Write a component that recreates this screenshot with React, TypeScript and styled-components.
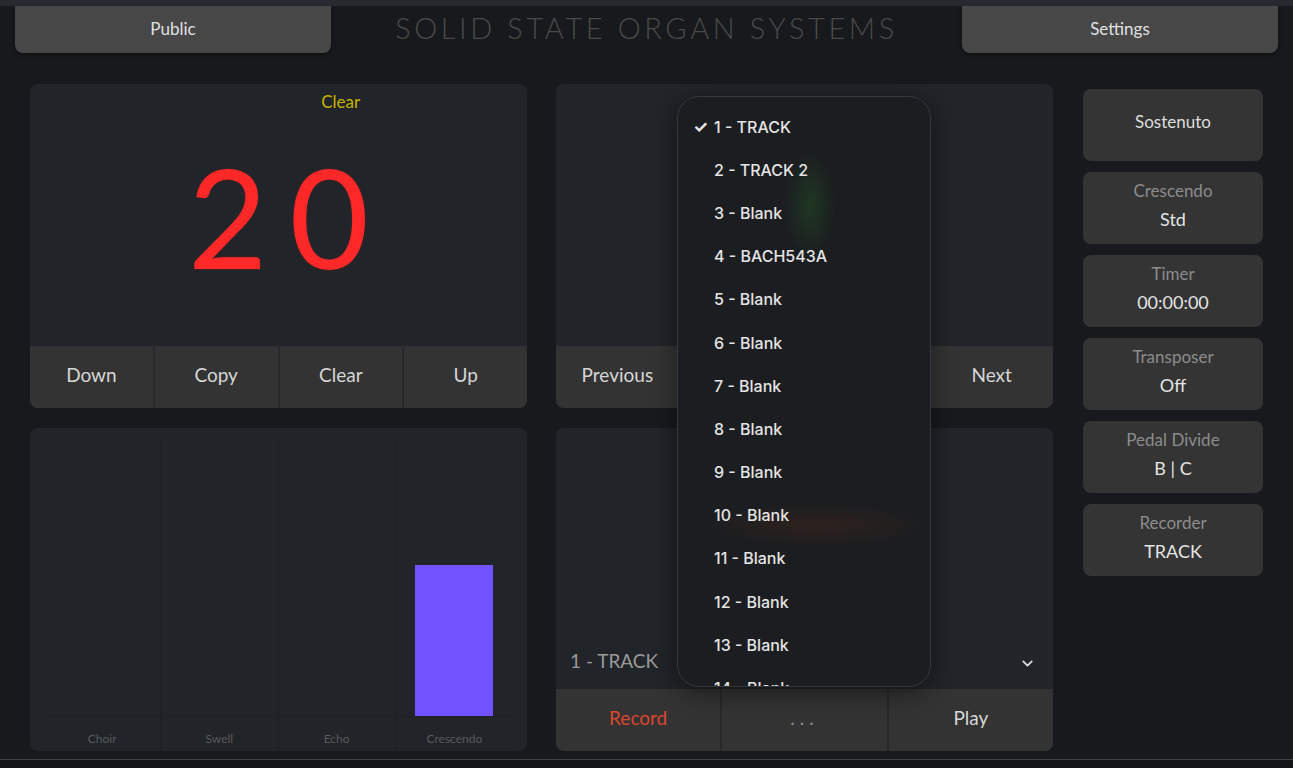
import React from "react";
import styled, { createGlobalStyle } from "styled-components";
import { ChevronDown } from "lucide-react";

const GlobalStyle = createGlobalStyle`
  html, body { margin: 0; padding: 0; background: #17191c; }
  body { font-family: Lato, "Noto Sans", sans-serif; }
  * { box-sizing: border-box; }
`;

const Page = styled.div`
  width: 1293px;
  height: 768px;
  overflow: hidden;
  display: flex;
  flex-direction: column;
  background: #17191c;
`;

const TopStrip = styled.div`
  height: 6px;
  background: #26292d;
`;

const Header = styled.header`
  display: grid;
  grid-template-columns: 316px 1fr 316px;
  height: 47px;
  padding: 0 15px;
`;

const HeaderButton = styled.div`
  background: #474747;
  border-radius: 0 0 8px 8px;
  color: #e0e0e0;
  font-size: 17px;
  display: flex;
  align-items: center;
  justify-content: center;
  padding-bottom: 3px;
  box-shadow: 0 2px 4px rgba(0, 0, 0, 0.35);
`;

const Title = styled.h1`
  margin: 0;
  display: flex;
  align-items: center;
  justify-content: center;
  color: #4a4a4a;
  font-size: 29px;
  font-weight: 300;
  letter-spacing: 3.6px;
  padding-bottom: 4px;
  white-space: nowrap;
`;

const Main = styled.main`
  display: grid;
  grid-template-columns: 497px 497px 181px;
  column-gap: 29px;
  padding: 31px 0 0 30px;
`;

const Column = styled.div`
  display: flex;
  flex-direction: column;
  gap: 20px;
  position: relative;
`;

const Panel = styled.section<{ $h: number }>`
  height: ${(p) => p.$h}px;
  background: #212428;
  border-radius: 8px;
  overflow: hidden;
  display: flex;
  flex-direction: column;
`;

const Display = styled.div`
  flex: 1;
  display: grid;
  grid-template-columns: repeat(4, 1fr);
  grid-template-rows: 1fr;
`;

const ClearLabel = styled.div`
  grid-row: 1;
  grid-column: 3;
  align-self: start;
  text-align: center;
  padding-top: 7px;
  color: #c8b200;
  font-size: 17px;
`;

const BigNumber = styled.div`
  grid-row: 1;
  grid-column: 1 / -1;
  align-self: center;
  text-align: center;
  color: #ff2828;
  font-size: 137px;
  line-height: 1;
  letter-spacing: 22px;
  padding-left: 22px;
  margin-top: 2px;
  text-shadow: 0 0 2px rgba(255, 40, 40, 0.4);
`;

const ButtonRow = styled.div<{ $cols: number }>`
  height: 62px;
  display: grid;
  grid-template-columns: repeat(${(p) => p.$cols}, 1fr);
  gap: 2px;
  background: #27292c;
`;

const PanelButton = styled.div<{ $tone?: "red" | "muted" }>`
  background: #333333;
  display: flex;
  align-items: center;
  justify-content: center;
  padding-bottom: 5px;
  font-size: 19px;
  color: ${(p) => (p.$tone === "red" ? "#dc4630" : p.$tone === "muted" ? "#8a8a8a" : "#d6d6d6")};
  letter-spacing: ${(p) => (p.$tone === "muted" ? "5px" : "0")};
`;

const Stage = styled.div`
  flex: 1;
`;

const Chart = styled.div`
  flex: 1;
  display: grid;
  grid-template-columns: repeat(4, 1fr);
  padding: 8px 14px 0;
`;

const ChartColumn = styled.div`
  display: flex;
  flex-direction: column;
  border-right: 1px solid rgba(0, 0, 0, 0.09);
  &:last-child { border-right: none; }
`;

const BarArea = styled.div`
  flex: 1;
  display: flex;
  align-items: flex-end;
  justify-content: center;
  border-bottom: 1px solid #1e2023;
`;

const Bar = styled.div`
  width: 78px;
  background: #7252ff;
`;

const ChartLabel = styled.div`
  height: 34px;
  padding-top: 8px;
  display: flex;
  align-items: center;
  justify-content: center;
  font-size: 12px;
  color: #585a5c;
`;

const TrackArea = styled.div`
  flex: 1;
  display: flex;
  align-items: flex-end;
  justify-content: space-between;
  padding: 0 17px 17px 14px;
`;

const TrackName = styled.div`
  color: #9a9a9a;
  font-size: 19px;
`;

const Dropdown = styled.div`
  position: absolute;
  top: 12px;
  left: 121px;
  width: 254px;
  height: 591px;
  border-radius: 22px;
  border: 1px solid #35383c;
  overflow: hidden;
  padding-top: 8px;
  background:
    radial-gradient(ellipse 26px 55px at 132px 108px, rgba(40, 130, 40, 0.26), transparent),
    radial-gradient(ellipse 115px 22px at 140px 428px, rgba(150, 60, 20, 0.16), transparent),
    #1b1d20;
  box-shadow: 0 6px 24px rgba(0, 0, 0, 0.45);
`;

const MenuItem = styled.div`
  height: 43.2px;
  display: flex;
  align-items: center;
  padding-left: 15px;
  font-family: Inter, "Liberation Sans", sans-serif;
  font-size: 16px;
  font-weight: 500;
  color: #e4e4e4;
  white-space: nowrap;
`;

const Check = styled.span`
  width: 21px;
  font-size: 17px;
  font-weight: 700;
`;

const RightColumn = styled.div`
  display: flex;
  flex-direction: column;
  gap: 11px;
  padding: 5px 0 0 1px;
`;

const SideButton = styled.div`
  width: 180px;
  height: 72px;
  background: #343434;
  border-radius: 8px;
  display: flex;
  flex-direction: column;
  align-items: center;
  justify-content: center;
  padding-bottom: 7px;
`;

const SideTitle = styled.div<{ $main?: boolean }>`
  line-height: 28px;
  font-size: 17px;
  color: ${(p) => (p.$main ? "#dedede" : "#8c8c8c")};
`;

const SideValue = styled.div`
  line-height: 28px;
  font-size: 18px;
  color: #e4e4e4;
`;

const Footer = styled.div`
  margin-top: auto;
  height: 9px;
  border-top: 1px solid #3d4044;
  background: #121417;
`;

const tracks = [
  "1 - TRACK",
  "2 - TRACK 2",
  "3 - Blank",
  "4 - BACH543A",
  "5 - Blank",
  "6 - Blank",
  "7 - Blank",
  "8 - Blank",
  "9 - Blank",
  "10 - Blank",
  "11 - Blank",
  "12 - Blank",
  "13 - Blank",
  "14 - Blank",
];

const divisions = [
  { name: "Choir", level: 0 },
  { name: "Swell", level: 0 },
  { name: "Echo", level: 0 },
  { name: "Crescendo", level: 151 },
];

const side = [
  { title: "Sostenuto" },
  { title: "Crescendo", value: "Std" },
  { title: "Timer", value: "00:00:00" },
  { title: "Transposer", value: "Off" },
  { title: "Pedal Divide", value: "B | C" },
  { title: "Recorder", value: "TRACK" },
];

export default function App() {
  return (
    <>
      <GlobalStyle />
      <Page>
        <TopStrip />
        <Header>
          <HeaderButton>Public</HeaderButton>
          <Title>SOLID STATE ORGAN SYSTEMS</Title>
          <HeaderButton>Settings</HeaderButton>
        </Header>
        <Main>
          <Column>
            <Panel $h={324}>
              <Display>
                <ClearLabel>Clear</ClearLabel>
                <BigNumber>20</BigNumber>
              </Display>
              <ButtonRow $cols={4}>
                <PanelButton>Down</PanelButton>
                <PanelButton>Copy</PanelButton>
                <PanelButton>Clear</PanelButton>
                <PanelButton>Up</PanelButton>
              </ButtonRow>
            </Panel>
            <Panel $h={323}>
              <Chart>
                {divisions.map((d) => (
                  <ChartColumn key={d.name}>
                    <BarArea>
                      {d.level > 0 && <Bar style={{ height: d.level }} />}
                    </BarArea>
                    <ChartLabel>{d.name}</ChartLabel>
                  </ChartColumn>
                ))}
              </Chart>
            </Panel>
          </Column>
          <Column>
            <Panel $h={324}>
              <Stage />
              <ButtonRow $cols={4}>
                <PanelButton>Previous</PanelButton>
                <PanelButton />
                <PanelButton />
                <PanelButton>Next</PanelButton>
              </ButtonRow>
            </Panel>
            <Panel $h={323}>
              <TrackArea>
                <TrackName>1 - TRACK</TrackName>
                <ChevronDown size={17} strokeWidth={2.6} color="#dcdcdc" />
              </TrackArea>
              <ButtonRow $cols={3}>
                <PanelButton $tone="red">Record</PanelButton>
                <PanelButton $tone="muted">...</PanelButton>
                <PanelButton>Play</PanelButton>
              </ButtonRow>
            </Panel>
            <Dropdown>
              {tracks.map((t, i) => (
                <MenuItem key={t}>
                  <Check>{i === 0 ? "✓" : ""}</Check>
                  {t}
                </MenuItem>
              ))}
            </Dropdown>
          </Column>
          <RightColumn>
            {side.map((s) => (
              <SideButton key={s.title}>
                <SideTitle $main={!s.value}>{s.title}</SideTitle>
                {s.value && <SideValue>{s.value}</SideValue>}
              </SideButton>
            ))}
          </RightColumn>
        </Main>
        <Footer />
      </Page>
    </>
  );
}
